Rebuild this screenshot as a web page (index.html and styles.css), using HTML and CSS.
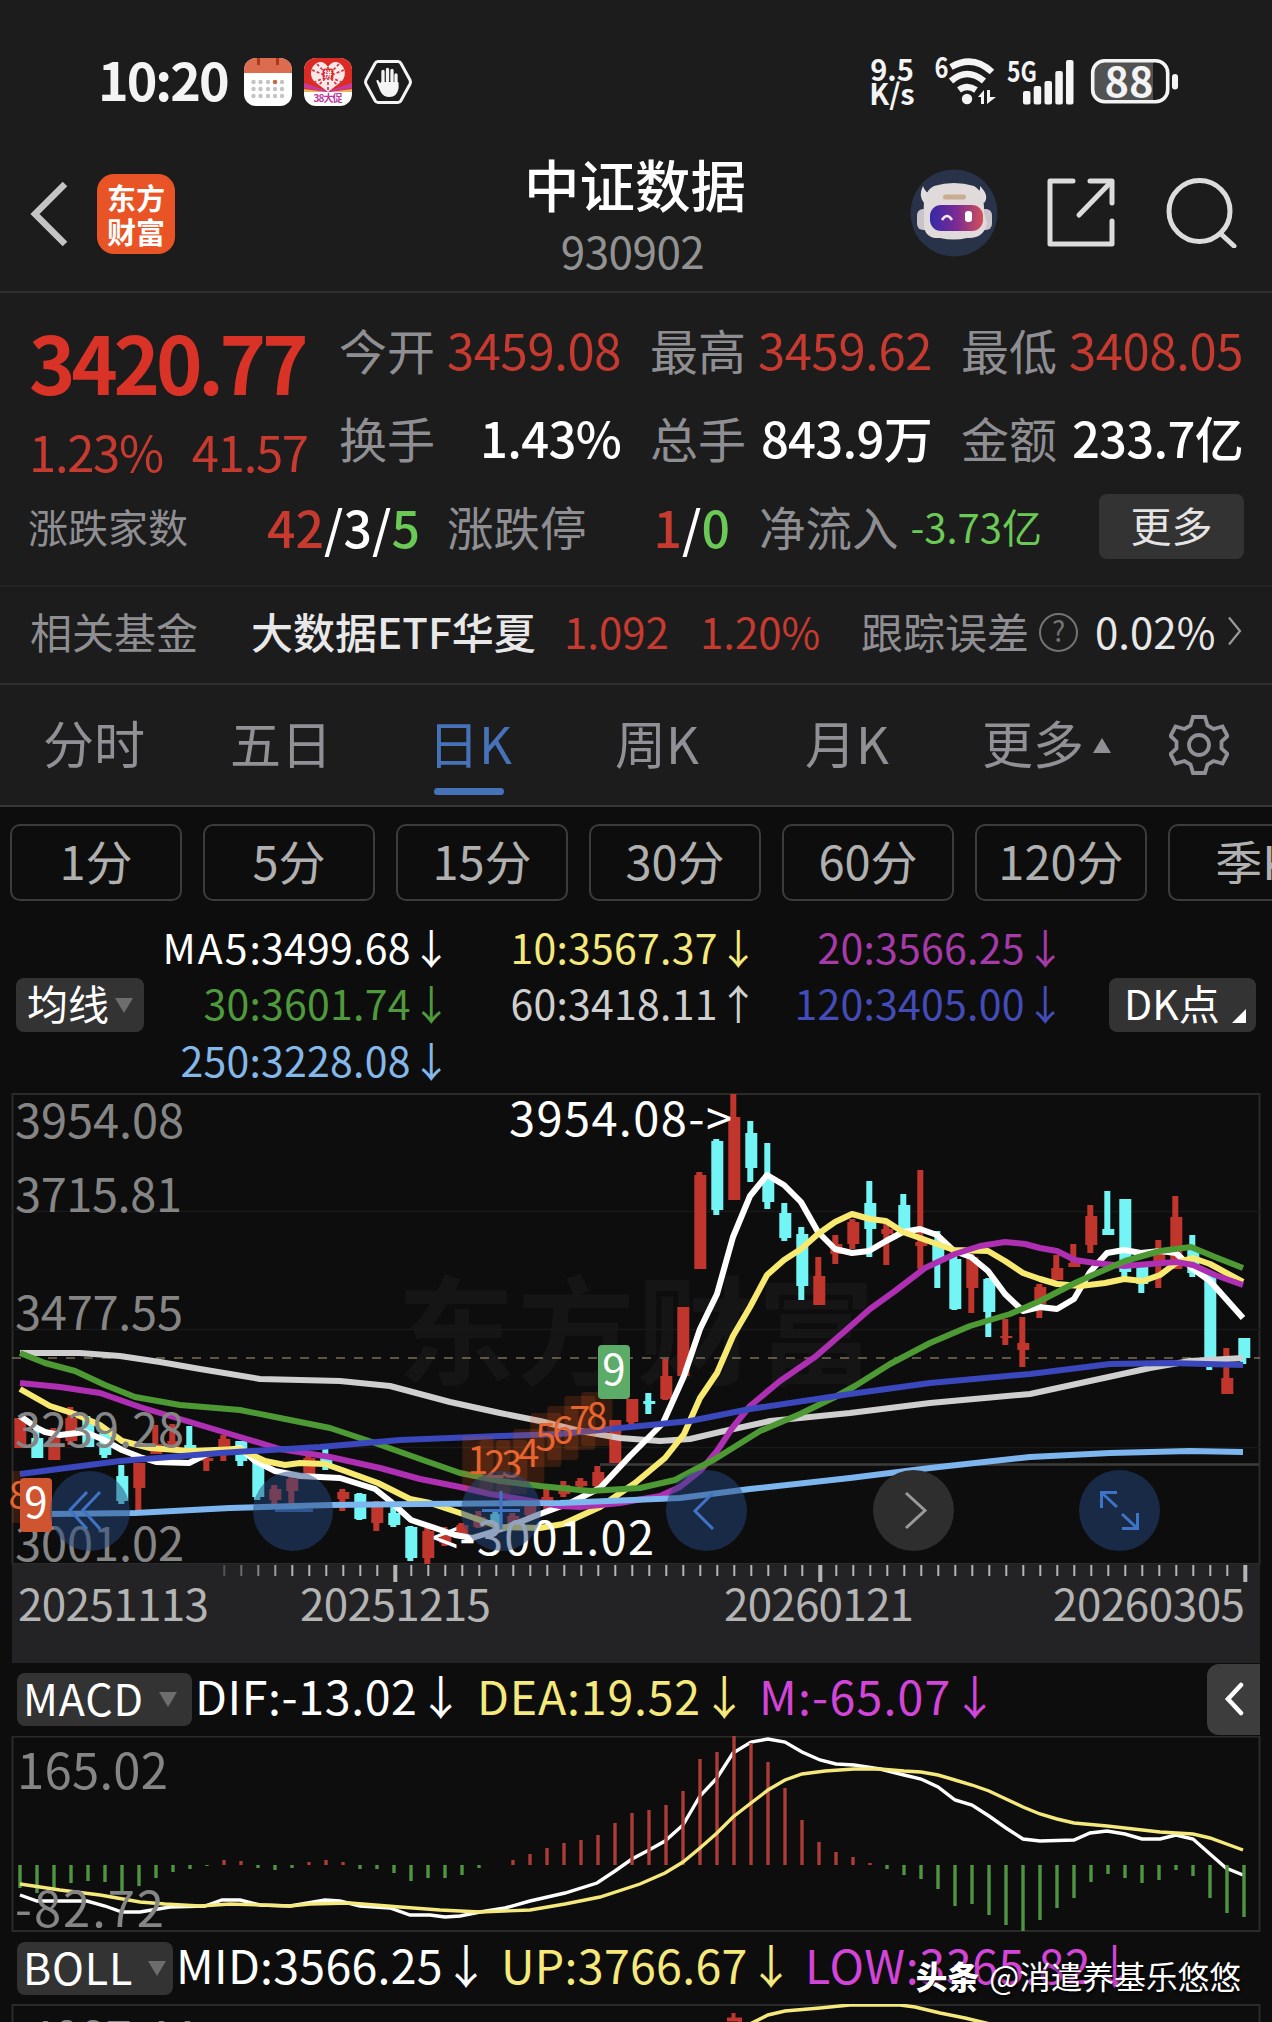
FILE: index.html
```html
<!DOCTYPE html>
<html lang="zh-CN">
<head>
  <meta charset="utf-8">
  <title>中证数据 930902</title>
  <link rel="stylesheet" href="styles.css">
</head>
<body>
  <!-- 状态栏 -->
  <div class="status">
    <span class="clock">10:20</span>
    <svg class="app-icon" width="48" height="48" viewBox="0 0 48 48">
      <rect width="48" height="48" rx="12" fill="#fff"/>
      <path d="M0 15V12A12 12 0 0 1 12 0H36A12 12 0 0 1 48 12V15Z" fill="#dd6b4d"/>
      <path d="M14.500 0V7M33.500 0V7" stroke="#a83a22" stroke-width="3"/>
      <g fill="#c4c4c4">
        <circle cx="9.500" cy="24" r="2.200"/><circle cx="16.500" cy="24" r="2.200"/><circle cx="24" cy="24" r="2.200"/><circle cx="31" cy="24" r="2.300" fill="#c46a45"/><circle cx="38" cy="24" r="2.200"/>
        <circle cx="9.500" cy="31" r="2.200"/><circle cx="16.500" cy="31" r="2.200"/><circle cx="24" cy="31" r="2.200"/><circle cx="31" cy="31" r="2.200"/><circle cx="38" cy="31" r="2.200"/>
        <circle cx="9.500" cy="38" r="2.200"/><circle cx="16.500" cy="38" r="2.200"/><circle cx="24" cy="38" r="2.200"/><circle cx="31" cy="38" r="2.200"/><circle cx="38" cy="38" r="2.200"/>
      </g>
    </svg>
    <svg class="app-icon" width="48" height="48" viewBox="0 0 48 48">
      <rect width="48" height="48" rx="12" fill="#fff"/>
      <path d="M0 33V12A12 12 0 0 1 12 0H36A12 12 0 0 1 48 12V33L24 34Z" fill="#dc2a24"/>
      <path d="M0 25L24 33L48 25V30L26 34H22L0 30Z" fill="#c53a9c"/>
      <path d="M0 31L22 34H0ZM48 31L26 34H48Z" fill="#efb35c"/>
      <path d="M24 34L10 23C4 16 8 5 16 4C20 4 22 6 24 9C26 6 28 4 32 4C40 5 44 16 38 23Z" fill="#fbe9ea"/>
      <path d="M24 9V34M8 12L40 25M40 12L8 25M13 6L35 29M35 6L13 29" stroke="#d23a48" stroke-width="1.700" stroke-dasharray="3 2"/>
      <rect x="18.500" y="10.500" width="11" height="10" rx="3" fill="#d8262a"/>
      <text class="tiny pin" x="24" y="19" text-anchor="middle">拼</text>
      <text class="tiny promo" x="24" y="43.500" text-anchor="middle" textLength="29">38大促</text>
    </svg>
    <svg class="app-icon" width="48" height="46" viewBox="0 0 48 46" fill="none" stroke="#f4f4f4" stroke-linejoin="round" stroke-linecap="round">
      <path d="M14 2.500H34Q36 2.500 37 4.500L46 21Q47 23 46 25L37 41.500Q36 43.500 34 43.500H14Q12 43.500 11 41.500L2 25Q1 23 2 21L11 4.500Q12 2.500 14 2.500Z" stroke-width="3"/>
      <path d="M19 24V12.500M23.500 22V10.500M28 22V11.500M32 25V16" stroke-width="3.300"/>
      <path d="M13.500 22L18 29L17.500 24H33.500V29Q32 37 25.500 37Q20 37 17.500 32Z" fill="#f4f4f4" stroke-width="2.200"/>
    </svg>
    <span class="speed"><b>9.5</b><b>K/s</b></span>
    <svg class="wifi" width="62" height="50" viewBox="934 56 62 50">
      <text class="sup" x="934.500" y="77" textLength="14" lengthAdjust="spacingAndGlyphs">6</text>
      <g fill="none" stroke="#f4f4f4" stroke-width="6.500">
        <path d="M951 66Q973 53 992 71"/>
        <path d="M951 80Q967 66 984 80"/>
        <path d="M959 89Q967 83 976 89"/>
      </g>
      <circle cx="967" cy="98" r="5.200" fill="#f4f4f4"/>
      <path d="M978 96L984 89V103H981V96ZM987 89H990V96H996L987 103Z" fill="#f4f4f4"/>
    </svg>
    <svg class="signal" width="66" height="50" viewBox="1008 56 66 50" fill="#f4f4f4">
      <text class="sup" x="1007" y="81" textLength="30" lengthAdjust="spacingAndGlyphs">5G</text>
      <rect x="1023" y="90" width="7.500" height="13.500" rx="2"/>
      <rect x="1033.700" y="85" width="7.500" height="18.500" rx="2"/>
      <rect x="1044.500" y="80" width="7.500" height="23.500" rx="2"/>
      <rect x="1055.300" y="70" width="7.500" height="33.500" rx="2"/>
      <rect x="1066" y="59" width="7.500" height="44.500" rx="2"/>
    </svg>
    <svg class="battery" width="88" height="46" viewBox="1091 58 88 46">
      <path d="M1104 61H1153V100H1104Q1093 100 1093 89V72Q1093 61 1104 61Z" fill="#525252"/>
      <rect x="1092.700" y="59.700" width="75" height="41" rx="12" fill="none" stroke="#f4f4f4" stroke-width="3.600"/>
      <rect x="1172" y="73" width="6" height="15.500" rx="3" fill="#f4f4f4"/>
      <text class="charge" x="1104.500" y="96" textLength="49" lengthAdjust="spacingAndGlyphs">88</text>
    </svg>
  </div>

  <!-- 标题栏 -->
  <div class="nav">
    <div class="nav-left">
      <svg width="38" height="66" viewBox="0 0 38 66"><path d="M35 3L5 33L35 63" fill="none" stroke="#c4c4c4" stroke-width="6.500"/></svg>
      <div class="logo"><span>东方</span><span>财富</span></div>
    </div>
    <div class="nav-title">
      <h1>中证数据</h1>
      <p>930902</p>
    </div>
    <div class="nav-right">
      <svg width="88" height="88" viewBox="0 0 88 88">
        <defs>
          <linearGradient id="visor"><stop offset="0" stop-color="#3629a8"/><stop offset=".5" stop-color="#7b2b94"/><stop offset="1" stop-color="#d0505a"/></linearGradient>
        </defs>
        <circle cx="44" cy="44" r="43.500" fill="#283249"/>
        <path d="M13 17Q8 27 14 34L22 25Q15 24 13 17ZM70 17Q71 24 64 26L74 34Q80 27 70 17Z" fill="#e2dedf"/>
        <rect x="7" y="40" width="14" height="21" rx="6" fill="#c9c3ca"/><rect x="68" y="40" width="14" height="21" rx="6" fill="#c9c3ca"/>
        <path d="M14 44Q12 23 24 17Q44 11 64 17Q75 23 74 44L77 54Q74 70 57 69Q44 72 30 69Q16 70 14 58Z" fill="#e0dadb"/>
        <rect x="33" y="25.500" width="23" height="5" rx="2.500" fill="#c9ad91"/>
        <rect x="20" y="36" width="53" height="26" rx="11" fill="url(#visor)"/>
        <path d="M32 51Q37 43 42 51" fill="none" stroke="#f3e9f7" stroke-width="2.500"/>
        <rect x="55" y="42" width="7" height="11" rx="3" fill="#fff"/>
      </svg>
      <svg width="70" height="70" viewBox="0 0 70 70" fill="none" stroke="#dcdcdc" stroke-width="5" stroke-linejoin="round" stroke-linecap="round">
        <path d="M26 3H3V66H65V43M43 3H65V25"/>
        <path d="M64 4L32 37"/>
      </svg>
      <svg width="72" height="70" viewBox="0 0 72 70" fill="none" stroke="#dcdcdc" stroke-width="5" stroke-linecap="round">
        <circle cx="33.500" cy="33" r="30.500"/>
        <path d="M55 56L68 68"/>
      </svg>
    </div>
  </div>

  <!-- 行情 -->
  <div class="quote">
    <div class="quote-main">
      <div class="price">3420.77</div>
      <div class="change"><span>1.23%</span><span>41.57</span></div>
    </div>
    <div class="quote-grid">
      <div class="cell"><label>今开</label><span class="red">3459.08</span></div>
      <div class="cell"><label>最高</label><span class="red">3459.62</span></div>
      <div class="cell"><label>最低</label><span class="red">3408.05</span></div>
      <div class="cell strong"><label>换手</label><span>1.43%</span></div>
      <div class="cell strong"><label>总手</label><span>843.9万</span></div>
      <div class="cell strong"><label>金额</label><span>233.7亿</span></div>
    </div>
  </div>
  <div class="breadth">
    <div class="count strong"><label class="small">涨跌家数</label><span><i class="red">42</i>/3/<i class="green">5</i></span></div>
    <div class="limit strong"><label>涨跌停</label><span><i class="red">1</i>/<i class="green">0</i></span></div>
    <div class="inflow"><label>净流入</label><span class="green">-3.73亿</span></div>
    <button class="more">更多</button>
  </div>
  <div class="fund">
    <label>相关基金</label>
    <span class="fund-name">大数据ETF华夏</span>
    <span class="red fund-price">1.092</span>
    <span class="red fund-rate">1.20%</span>
    <label>跟踪误差</label>
    <span class="help">?</span>
    <span class="fund-error">0.02%</span>
    <svg width="16" height="30" viewBox="0 0 16 30"><path d="M2 1.500L13 15L2 28.500" fill="none" stroke="#9a9a9a" stroke-width="2.200"/></svg>
  </div>

  <!-- 周期切换 -->
  <div class="tabs">
    <span class="tab tab-fs">分时</span>
    <span class="tab tab-5d">五日</span>
    <span class="tab tab-day active">日K</span>
    <span class="tab tab-week">周K</span>
    <span class="tab tab-month">月K</span>
    <span class="tab tab-more">更多</span>
    <svg class="caret-up" width="18" height="15" viewBox="0 0 18 15"><path d="M9 0L18 15H0Z" fill="#909096"/></svg>
    <svg class="gear" width="60" height="60" viewBox="-30 -30 60 60" fill="none" stroke="#909096" stroke-width="3.800">
      <path d="M-6 -28H6L8.500 -19.500L14.500 -16L23.500 -18.500L28.500 -9L22.500 -3.500V3.500L28.500 9L23.500 18.500L14.500 16L8.500 19.500L6 28H-6L-8.500 19.500L-14.500 16L-23.500 18.500L-28.500 9L-22.500 3.500V-3.500L-28.500 -9L-23.500 -18.500L-14.500 -16L-8.500 -19.500Z"/>
      <circle r="10"/>
    </svg>
  </div>
  <div class="chips">
    <span>1分</span><span>5分</span><span>15分</span><span>30分</span><span>60分</span><span>120分</span><span>季K</span>
  </div>

  <!-- 均线 -->
  <div class="legend">
    <button class="pick">均线<i class="tri"></i></button>
    <div class="ma">
      <span class="c-white"><i class="wide">MA5</i>:3499.68↓</span><span class="c-yellow">10:3567.37↓</span><span class="c-purple">20:3566.25↓</span>
      <span class="c-green">30:3601.74↓</span><span class="c-grey">60:3418.11↑</span><span class="c-blue">120:3405.00↓</span>
      <span class="c-sky">250:3228.08↓</span>
    </div>
    <button class="pick dk">DK点<i class="corner"></i></button>
  </div>

  <!-- K线主图 -->
  <svg class="chart" width="1272" height="576" viewBox="0 1086 1272 576">
    <g class="watermark"><text x="397" y="1375" textLength="478">东方财富</text></g>
    <rect class="frame" x="12.500" y="1093" width="1247" height="470"/>
    <path class="grid" d="M12 1210.500H1260M12 1328.500H1260M12 1446.500H1260"/>
    <path d="M600 1463.500H1259" stroke="#3c3c3c" stroke-width="2.500"/>
    <path d="M12 1357H1260" stroke="#7a705c" stroke-width="1.600" stroke-dasharray="9 9"/>
    <rect x="12" y="1563" width="1248" height="99" fill="#232325"/>
    <g id="ticks"></g>
    <g id="candles"></g>
    <g id="lines"></g>
    <g class="axis">
      <text x="15" y="1137" textLength="169">3954.08</text>
      <text x="15" y="1211" textLength="167">3715.81</text>
      <text x="15" y="1329" textLength="168">3477.55</text>
      <text x="15" y="1446" textLength="169">3239.28</text>
      <text x="15" y="1560" textLength="169">3001.02</text>
    </g>
    <g id="sequence" class="sequence"></g>
    <rect x="20" y="1477" width="32" height="54" rx="4" fill="#cf5530"/>
    <text class="nine" x="36" y="1517">9</text>
    <rect x="598" y="1344" width="32" height="54" rx="4" fill="#5dab69"/>
    <text class="nine" x="614" y="1384">9</text>
    <text class="mark" x="509" y="1135" textLength="223">3954.08-&gt;</text>
    <text class="mark" x="432" y="1554" textLength="222">&lt;-3001.02</text>
    <!-- 浮动操作按钮 -->
    <g class="fab" fill="none" stroke-width="3">
      <circle cx="90" cy="1510" r="40"/><path d="M87 1491L70 1509L87 1528M100 1491L83 1509L100 1528"/>
      <circle cx="293" cy="1510" r="40"/><path d="M275 1509.500H313" opacity=".6"/>
      <circle cx="501" cy="1510" r="40"/><path d="M482 1509.500H520M501 1490V1528"/>
      <circle cx="706.500" cy="1509.500" r="40.500"/><path d="M713 1492L695 1510L713 1528"/>
      <circle class="off" cx="913.500" cy="1509.500" r="40.500"/><path class="off" d="M906 1492L925 1509.500L906 1527"/>
      <circle cx="1119.500" cy="1509.500" r="40.500"/><path d="M1117 1491.500H1101.500V1507M1102 1492L1117 1506M1122 1527.500H1137.500V1512M1137 1527L1122 1513"/>
    </g>
    <g class="dates">
      <text x="18" y="1620" textLength="191">20251113</text>
      <text x="300" y="1620" textLength="191">20251215</text>
      <text x="724" y="1620" textLength="190">20260121</text>
      <text x="1053" y="1620" textLength="192">20260305</text>
    </g>
  </svg>

  <!-- MACD -->
  <div class="indicator macd">
    <button class="pick">MACD<i class="tri"></i></button>
    <span class="c-white">DIF:-13.02↓</span>
    <span class="c-yellow">DEA:19.52↓</span>
    <span class="c-pink">M:-65.07↓</span>
    <span class="drawer"><svg width="22" height="34" viewBox="0 0 22 34"><path d="M18 3L5 17L18 31" fill="none" stroke="#fff" stroke-width="4.500" stroke-linecap="round"/></svg></span>
  </div>
  <svg class="chart" width="1272" height="196" viewBox="0 1735 1272 196">
    <rect class="frame" x="12.500" y="1735.500" width="1247" height="194.500"/>
    <g id="macd"></g>
    <g class="axis axis-macd">
      <text x="17" y="1788" textLength="151">165.02</text>
      <text x="15" y="1926" textLength="149">-82.72</text>
    </g>
  </svg>

  <!-- BOLL -->
  <div class="indicator boll">
    <button class="pick">BOLL<i class="tri"></i></button>
    <span class="c-white mid">MID:3566.25↓</span>
    <span class="c-yellow up">UP:3766.67↓</span>
    <span class="c-pink low">LOW:3365.82↓</span>
    <span class="credit"><b>头条</b>@消遣养基乐悠悠</span>
  </div>
  <svg class="chart" width="1272" height="19" viewBox="0 2003 1272 19">
    <rect class="frame" x="12.500" y="2004" width="1247" height="40"/>
    <path d="M733.500 2012V2018M727 2018.500H740V2022" fill="none" stroke="#c0352c" stroke-width="4"/>
    <path d="M750 2023L768 2014L785 2010L820 2007L850 2004H900L915 2006L940 2012L965 2017L990 2023" fill="none" stroke="#f5e97c" stroke-width="3.500"/>
    <g class="axis"><text x="28" y="2054" textLength="168">4087.44</text></g>
  </svg>
  <script src="chart.js"></script>
</body>
</html>
```
FILE: styles.css
```css
* {
  box-sizing: border-box;
}
body {
  margin: 0;
  width: 1272px;
  height: 2022px;
  overflow: hidden;
  background: #0d0d0d;
  color: #fff;
  font-family: "Noto Sans CJK SC", "Noto Sans", sans-serif;
  white-space: nowrap;
}
svg {
  display: block;
  flex: none;
}
i {
  font-style: normal;
}
button {
  border: 0;
  padding: 0;
  color: #fff;
  font-family: inherit;
  background: #333;
  border-radius: 8px;
}
label {
  color: #8f8f93;
}
.red {
  color: #c73a30;
}
.green {
  color: #6bc956;
}
.strong span {
  font-weight: 500;
}

/* 状态栏 */
.status {
  height: 124px;
  padding: 39px 0 0 98px;
  display: flex;
  align-items: center;
  background: #1c1c1c;
  color: #f4f4f4;
}
.status svg {
  overflow: visible;
}
.clock {
  width: 146px;
  margin-top: -6px;
  font-size: 52px;
  font-weight: 700;
  line-height: 60px;
  letter-spacing: -2px;
}
.app-icon {
  margin-right: 12px;
}
.tiny {
  font-weight: 700;
}
.pin {
  font-size: 8px;
  fill: #fff;
}
.promo {
  font-size: 10px;
  fill: #c0369c;
}
.speed {
  width: 50px;
  margin: -4px 0 0 443px;
  display: flex;
  flex-direction: column;
  align-items: center;
  font-size: 29px;
  line-height: 24px;
}
.wifi {
  margin-left: 17px;
}
.signal {
  margin-left: 12px;
}
.battery {
  margin-left: 17px;
}
.sup {
  font-size: 28px;
  font-weight: 700;
  fill: #f4f4f4;
}
.charge {
  font-size: 40px;
  font-weight: 700;
  fill: #f4f4f4;
}

/* 标题栏 */
.nav {
  height: 169px;
  padding: 0 34px 0 30px;
  display: grid;
  grid-template-columns: 1fr 300px 1fr;
  background: #1c1c1c;
  border-bottom: 2px solid #303030;
}
.nav-left,
.nav-right {
  display: flex;
  align-items: center;
  padding-top: 13px;
}
.nav-right {
  justify-content: flex-end;
  gap: 49px;
  padding-top: 11px;
}
.logo {
  width: 78px;
  height: 80px;
  margin-left: 29px;
  border-radius: 17px;
  background: #e95427;
  display: flex;
  flex-direction: column;
  align-items: center;
  justify-content: center;
  font-size: 29px;
  font-weight: 700;
  line-height: 34px;
}
.nav-title {
  text-align: center;
  padding-left: 2px;
}
.nav-title h1 {
  margin: 26px 0 0;
  font-size: 55.500px;
  font-weight: 500;
  line-height: 66px;
}
.nav-title p {
  margin: 5px 0 0;
  color: #929292;
  font-size: 44px;
  line-height: 58px;
  letter-spacing: -.5px;
  padding-right: 5px;
}

/* 行情 */
.quote {
  display: flex;
  height: 187px;
  padding: 12px 0 0 29px;
  background: #1c1c1c;
}
.quote-main {
  width: 310px;
}
.price {
  height: 111px;
  color: #d93226;
  font-size: 79px;
  font-weight: 700;
  line-height: 111px;
  letter-spacing: -4.300px;
}
.change {
  display: flex;
  gap: 29px;
  color: #c73a30;
  font-size: 49px;
  line-height: 69px;
  letter-spacing: -1.300px;
}
.quote-grid {
  display: grid;
  grid-template-columns: repeat(3, 282px);
  grid-auto-rows: 88px;
  column-gap: 29px;
}
.cell {
  display: flex;
  justify-content: space-between;
  font-size: 49px;
  line-height: 88px;
  letter-spacing: -.4px;
}
.cell.strong {
  letter-spacing: -.7px;
}
.cell label {
  font-size: 48px;
  letter-spacing: 0;
}
.breadth {
  display: flex;
  height: 107px;
  padding: 2px 28px 0 28px;
  background: #1c1c1c;
  border-bottom: 2px solid #232323;
  font-size: 50px;
  line-height: 88px;
}
.breadth > div {
  display: flex;
  justify-content: space-between;
}
.breadth label {
  font-size: 46.500px;
}
.breadth .small {
  font-size: 40px;
}
.count {
  width: 392px;
}
.limit {
  width: 283px;
  margin-left: 27px;
}
.inflow {
  width: 283px;
  margin-left: 29px;
}
.inflow span {
  font-size: 40px;
}
.more {
  width: 145px;
  height: 65px;
  margin: 12px 0 0 auto;
  color: #e4e4e4;
  font-size: 41px;
  line-height: 58px;
  padding-bottom: 6px;
}
.fund {
  display: flex;
  align-items: center;
  height: 98px;
  padding: 0 28px 9px 30px;
  background: #1c1c1c;
  border-bottom: 2px solid #303030;
  font-size: 42px;
  line-height: 60px;
}
.fund-name {
  width: 313px;
  margin-left: 53px;
  color: #e8e8e8;
  font-weight: 500;
}
.fund-price {
  width: 136px;
}
.fund-rate {
  width: 161px;
}
.help {
  width: 39px;
  height: 39px;
  margin: 4px 0 0 10px;
  border: 2.500px solid #737373;
  border-radius: 50%;
  color: #737373;
  font-size: 28px;
  line-height: 31px;
  text-align: center;
}
.fund-error {
  width: 132px;
  margin-left: 17px;
  color: #e8e8e8;
}

/* 周期切换 */
.tabs {
  display: flex;
  height: 122px;
  padding-left: 43px;
  background: #1c1c1c;
  border-bottom: 2px solid #383838;
  color: #909096;
  font-size: 51px;
  line-height: 115px;
}
.tab-fs {
  width: 187px;
}
.tab-5d {
  width: 198px;
}
.tab-day {
  width: 187px;
}
.tab-week {
  width: 190px;
}
.tab-month {
  width: 177px;
}
.tab-more {
  width: 111px;
}
.active {
  color: #4672b8;
}
.active::after {
  content: "";
  display: block;
  width: 70px;
  height: 7px;
  margin: -12px 0 0 6px;
  border-radius: 4px;
  background: #4672b8;
}
.caret-up {
  margin-top: 53px;
}
.gear {
  margin: 30px 0 0 58px;
}
.chips {
  display: flex;
  gap: 21px;
  height: 111px;
  padding: 17px 0 0 10px;
  overflow: hidden;
}
.chips span {
  flex: none;
  width: 172px;
  height: 77px;
  border: 2px solid #3c3c3c;
  border-radius: 10px;
  color: #b0b0b0;
  font-size: 47px;
  line-height: 68px;
  text-align: center;
}

/* 均线 */
.legend {
  display: flex;
  height: 169px;
  padding: 0 16px;
}
.pick {
  display: flex;
  align-items: center;
  flex: none;
  width: 128px;
  height: 54px;
  padding: 0 0 6px 11px;
  font-size: 41px;
  line-height: 48px;
}
.legend .pick {
  margin-top: 60px;
}
.tri {
  border: 9px solid transparent;
  border-top: 15px solid #6d6d6d;
  border-bottom: 0;
  margin: 6px 0 0 6px;
}
.ma {
  display: grid;
  grid-template-columns: 308px 307px 307px;
  grid-auto-rows: 56.300px;
  width: 922px;
  font-size: 41px;
  line-height: 56px;
  letter-spacing: .250px;
  text-align: right;
}
.wide {
  letter-spacing: 2px;
}
.legend .dk {
  width: 147px;
  margin-left: auto;
  padding-left: 15px;
}
.corner {
  border-left: 14px solid transparent;
  border-bottom: 14px solid #fff;
  margin: 28px 0 0 12px;
}
.c-white { color: #fff; }
.c-yellow { color: #f5e97c; }
.c-purple { color: #a63aa8; }
.c-green { color: #4f9a3c; }
.c-grey { color: #cfcfcf; }
.c-blue { color: #434cb8; }
.c-sky { color: #84b8ea; }
.c-pink { color: #d345d8; }

/* 图表 */
.frame {
  fill: none;
  stroke: #2a2a2a;
  stroke-width: 2;
}
.grid {
  stroke: #191919;
  stroke-width: 1.500;
}
.watermark {
  font-size: 118px;
  font-weight: 700;
  fill: #151515;
}
.axis {
  font-size: 47px;
  fill: #858585;
}
.axis-macd {
  font-size: 49px;
}
.dates {
  font-size: 44px;
  fill: #b4b4b4;
}
.mark {
  font-size: 47px;
  fill: #fff;
}
.nine {
  font-size: 42px;
  fill: #fff;
  text-anchor: middle;
}
.sequence {
  font-size: 38px;
  fill: #e8652f;
  text-anchor: middle;
}
.sequence rect {
  fill: #d9571a;
  fill-opacity: .2;
}
.fab circle {
  fill: #26477f;
  fill-opacity: .5;
}
.fab path {
  stroke: #3f73c6;
}
.fab circle.off {
  fill: #2e2e2e;
  fill-opacity: 1;
}
.fab path.off {
  stroke: #9a9a9a;
}

/* 副图指标 */
.indicator {
  display: flex;
  height: 73px;
  padding: 0 12px 0 17px;
  font-size: 46.500px;
  line-height: 64px;
}
.indicator .pick {
  width: 175px;
  height: 53px;
  margin-top: 10px;
  padding-left: 6px;
  font-size: 43px;
  letter-spacing: .8px;
}
.indicator .tri {
  margin-left: 15px;
}
.indicator > span {
  margin-left: 3px;
  width: 279px;
}
.macd .c-white {
  letter-spacing: .6px;
}
.macd .c-yellow {
  letter-spacing: .8px;
}
.macd .c-pink {
  letter-spacing: 1.200px;
}
.indicator > span.drawer {
  width: 53px;
  height: 71px;
  margin: 1px 0 0 auto;
  padding: 18px 0 0 16px;
  border-radius: 12px 0 0 12px;
  background: #3d3d3d;
}
.boll {
  height: 72px;
  position: relative;
}
.boll .pick {
  width: 156px;
}
.boll > .mid {
  width: 322px;
  letter-spacing: .250px;
}
.boll > .up {
  width: 301px;
  letter-spacing: .3px;
}
.boll > .low {
  width: auto;
  letter-spacing: .6px;
}
/* 署名压在 LOW 数值上方 */
.boll > span.credit {
  position: absolute;
  right: 31px;
  top: 19px;
  width: auto;
  font-size: 31.700px;
  line-height: 48px;
  text-shadow: 1px 2px 3px #000;
}
.credit b {
  font-weight: 900;
  margin-right: 10px;
}
```
FILE: chart.js
```javascript
const NS = 'http://www.w3.org/2000/svg'
const RED = '#c0352c', CYAN = '#74f5f5'

// 第 i 根K线的中心横坐标
const cx = (i) => 20.3 + 17 * i

function add(parent, tag, attrs, text) {
  const node = document.createElementNS(NS, tag)
  for (let key in attrs) node.setAttribute(key, attrs[key])
  if (text) node.textContent = text
  document.getElementById(parent).appendChild(node)
}

// [涨跌, 最高, 实体上沿, 实体下沿, 最低]
const candles = [
  [1,1417,1417,1447,1447],[0,1427,1437,1457,1457],[1,1427,1436,1459,1459],[1,1406,1417,1440,1444],
  [0,1415,1418,1446,1446],[0,1430,1432,1454,1457],[0,1464,1475,1500,1503],[1,1462,1462,1487,1509],
  [1,1424,1443,1453,1453],[1,1423,1440,1448,1450],[0,1425,1444,1449,1450],[1,1452,1457,1460,1470],
  [1,1434,1438,1447,1460],[0,1440,1440,1460,1465],[0,1455,1457,1496,1499],[1,1484,1488,1499,1504],
  [1,1474,1478,1490,1504],[1,1452,1457,1473,1475],[0,1443,1455,1463,1469],[1,1488,1491,1498,1510],
  [0,1492,1493,1518,1519],[1,1500,1503,1522,1530],[0,1506,1512,1524,1526],[0,1525,1526,1557,1560],
  [1,1527,1530,1557,1563],[1,1526,1535,1542,1545],[1,1522,1524,1533,1535],[1,1510,1516,1526,1527],
  [0,1511,1513,1526,1530],[1,1512,1515,1522,1524],[1,1500,1504,1514,1518],[1,1488,1496,1500,1510],
  [1,1480,1484,1493,1496],[1,1477,1480,1485,1486],[1,1465,1471,1485,1488],[1,1419,1419,1462,1462],
  [1,1398,1398,1421,1424],[0,1392,1400,1403,1413],[1,1358,1375,1398,1399],[1,1306,1306,1375,1375],
  [1,1171,1174,1268,1268],[0,1138,1140,1209,1214],[1,1093,1116,1199,1199],[0,1120,1132,1167,1181],
  [0,1142,1178,1201,1208],[0,1202,1212,1237,1240],[0,1226,1233,1285,1299],[1,1256,1275,1304,1304],
  [1,1234,1243,1253,1263],[1,1218,1221,1243,1248],[0,1180,1202,1228,1256],[1,1222,1228,1233,1264],
  [0,1193,1204,1229,1232],[1,1169,1241,1245,1268],[0,1230,1242,1260,1287],[0,1254,1258,1308,1309],
  [1,1253,1256,1287,1312],[0,1277,1278,1311,1336],[1,1318,1335,1337,1344],[1,1316,1342,1349,1366],
  [1,1283,1286,1303,1317],[1,1254,1267,1279,1279],[1,1243,1262,1266,1266],[1,1204,1215,1244,1252],
  [0,1190,1228,1234,1234],[0,1198,1198,1271,1277],[0,1262,1265,1283,1292],[1,1239,1250,1262,1287],
  [1,1195,1216,1268,1268],[0,1234,1247,1272,1276],[0,1272,1272,1362,1369],[1,1347,1377,1393,1393],
  [0,1337,1337,1357,1363]
]
candles.forEach(([up, high, top, bottom, low], i) => {
  const fill = up ? RED : CYAN
  add('candles', 'rect', {x: cx(i) - 4, y: high, width: 6, height: low - high, fill})
  add('candles', 'rect', {x: cx(i) - 6, y: top, width: 12, height: bottom - top, fill})
})

// 均线
const lines = [
  ['#cfcfcf', '20,1352 80,1352 120,1355 160,1361 200,1368 260,1378 340,1380 390,1385 450,1401 500,1412 540,1420 580,1430 620,1437 660,1440 690,1438 720,1431 770,1420 850,1412 930,1402 1030,1393 1090,1380 1150,1367 1190,1360 1243,1357'],
  ['#fff', '20,1415 37,1427 45,1431 60,1434 85,1431 102,1438 122,1449 140,1456 156,1461 189,1462 207,1453 240,1447 255,1460 275,1470 300,1475 340,1477 375,1488 390,1500 411,1519 435,1527 455,1534 472,1537 505,1527 540,1513 570,1502 600,1487 630,1455 663,1422 684,1375 700,1328 717,1293 733,1236 750,1195 767,1174 784,1184 801,1201 818,1231 835,1248 852,1252 869,1250 886,1240 903,1231 920,1228 937,1234 954,1250 971,1256 988,1270 1005,1293 1023,1310 1040,1306 1057,1308 1074,1298 1090,1271 1107,1252 1124,1249 1141,1252 1160,1250 1176,1252 1193,1268 1210,1280 1243,1317'],
  ['#f8ea70', '20,1388 50,1405 75,1413 100,1424 122,1440 150,1447 190,1450 240,1448 265,1460 285,1464 300,1462 325,1463 345,1470 378,1482 410,1498 430,1502 460,1512 500,1526 540,1527 563,1523 600,1506 635,1482 665,1457 684,1433 700,1397 717,1372 733,1335 750,1306 767,1274 784,1259 801,1248 818,1233 835,1221 852,1213 870,1218 886,1220 903,1231 954,1249 988,1250 1005,1260 1023,1272 1040,1278 1057,1283 1080,1285 1105,1282 1124,1278 1143,1280 1160,1274 1176,1262 1193,1257 1210,1263 1243,1281'],
  ['#ae2fb2', '20,1382 60,1386 100,1392 140,1406 190,1421 230,1433 280,1448 330,1456 380,1467 420,1478 460,1486 490,1493 520,1498 560,1505 580,1506 620,1502 660,1495 680,1486 700,1470 717,1450 733,1426 750,1405 780,1380 815,1356 845,1330 870,1308 895,1290 925,1267 955,1253 980,1245 1005,1241 1025,1243 1040,1247 1057,1250 1075,1259 1095,1262 1124,1265 1150,1263 1176,1261 1193,1264 1215,1274 1243,1284'],
  ['#4d9a35', '20,1352 45,1362 75,1370 105,1384 135,1396 180,1404 240,1409 285,1418 330,1427 375,1442 420,1458 460,1472 500,1480 540,1485 590,1490 640,1487 675,1479 715,1458 760,1430 800,1413 835,1396 855,1385 890,1363 930,1342 970,1325 1010,1313 1040,1300 1075,1282 1095,1273 1125,1260 1160,1250 1191,1246 1215,1256 1243,1267'],
  ['#3b48bd', '20,1473 120,1460 220,1452 320,1446 400,1439 500,1435 560,1433 620,1427 690,1420 750,1408 850,1393 930,1382 1030,1373 1110,1363 1170,1362 1243,1364'],
  ['#7db6ee', '52,1513 135,1512 230,1507 330,1504 420,1503 560,1502 680,1497 750,1488 850,1477 930,1467 1030,1456 1110,1452 1190,1450 1243,1451']
]
lines.forEach(([stroke, points]) => {
  add('lines', 'polyline', {points, stroke, fill: 'none', 'stroke-width': 6, 'stroke-linejoin': 'round'})
})

// 时间轴刻度
for (let i = 12; i <= 72; i++) {
  const major = i === 22 || i === 47 || i === 72
  add('ticks', 'rect', {
    x: cx(i) - 1, y: 1564, width: major ? 4 : 2, height: major ? 17 : 11,
    fill: '#b4b4b4', opacity: i < 16 ? (i - 10) / 6 : 1
  })
}

// 九转序列
const baselines = [1473, 1477, 1477, 1466, 1450, 1443, 1433, 1429]
baselines.forEach((y, n) => {
  add('sequence', 'rect', {x: cx(27 + n) - 17, y: y - 38, width: 31, height: 54, rx: 3})
})
baselines.forEach((y, n) => {
  add('sequence', 'text', {x: cx(27 + n) - 1.5, y}, String(n + 1))
})
add('sequence', 'rect', {x: 12, y: 1470, width: 9, height: 52})
add('sequence', 'text', {x: 19, y: 1508}, '8')

// MACD 柱，正数在零轴上方
const bars = [
  -23,-28,-25,-18,-16,-17,-26,-21,-13,-7,-4,-1,5,4,-3,-5,-3,3,5,3,-4,-4,-8,-16,-13,-13,-10,-3,0,
  5,11,17,22,25,30,42,52,55,60,74,106,113,129,122,103,77,45,23,13,8,2,
  -4,-10,-14,-24,-41,-39,-50,-60,-66,-55,-43,-33,-17,-9,-13,-18,-15,-5,-11,-33,-48,-52
]
const dif = '20,1894 37,1900 87,1900 105,1905 122,1911 140,1911 170,1906 205,1905 222,1899 240,1899 260,1904 290,1905 325,1899 340,1900 360,1905 390,1907 410,1914 430,1914 445,1916 460,1915 480,1911 505,1907 530,1900 565,1892 597,1882 615,1870 632,1858 649,1849 665,1840 683,1824 700,1795 717,1777 733,1752 751,1741 768,1738 785,1741 802,1751 820,1759 836,1763 854,1764 880,1768 904,1774 921,1778 938,1786 955,1799 972,1804 989,1815 1006,1827 1023,1838 1040,1840 1074,1839 1090,1832 1107,1830 1125,1833 1142,1838 1160,1838 1176,1834 1193,1838 1210,1853 1226,1867 1243,1874'
const dea = '20,1883 60,1889 100,1894 140,1901 165,1903 200,1905 230,1903 290,1905 310,1903 350,1902 400,1906 440,1909 480,1911 530,1909 565,1903 600,1896 640,1883 665,1872 683,1861 700,1847 717,1832 733,1816 751,1802 768,1789 785,1779 802,1773 825,1770 854,1768 880,1768 904,1770 921,1771 938,1774 955,1779 972,1784 989,1790 1006,1798 1023,1806 1040,1813 1057,1818 1074,1822 1107,1825 1160,1831 1193,1833 1210,1837 1243,1849'
add('macd', 'polyline', {points: dif, stroke: '#fff', fill: 'none', 'stroke-width': 3.4})
bars.forEach((v, i) => {
  add('macd', 'rect', {
    x: cx(i) - 2, y: v > 0 ? 1864 - v : 1864, width: 3.4, height: Math.abs(v),
    fill: v > 0 ? '#ac3c38' : '#4f9440'
  })
})
add('macd', 'polyline', {points: dea, stroke: '#f5e97c', fill: 'none', 'stroke-width': 3.4})
```
